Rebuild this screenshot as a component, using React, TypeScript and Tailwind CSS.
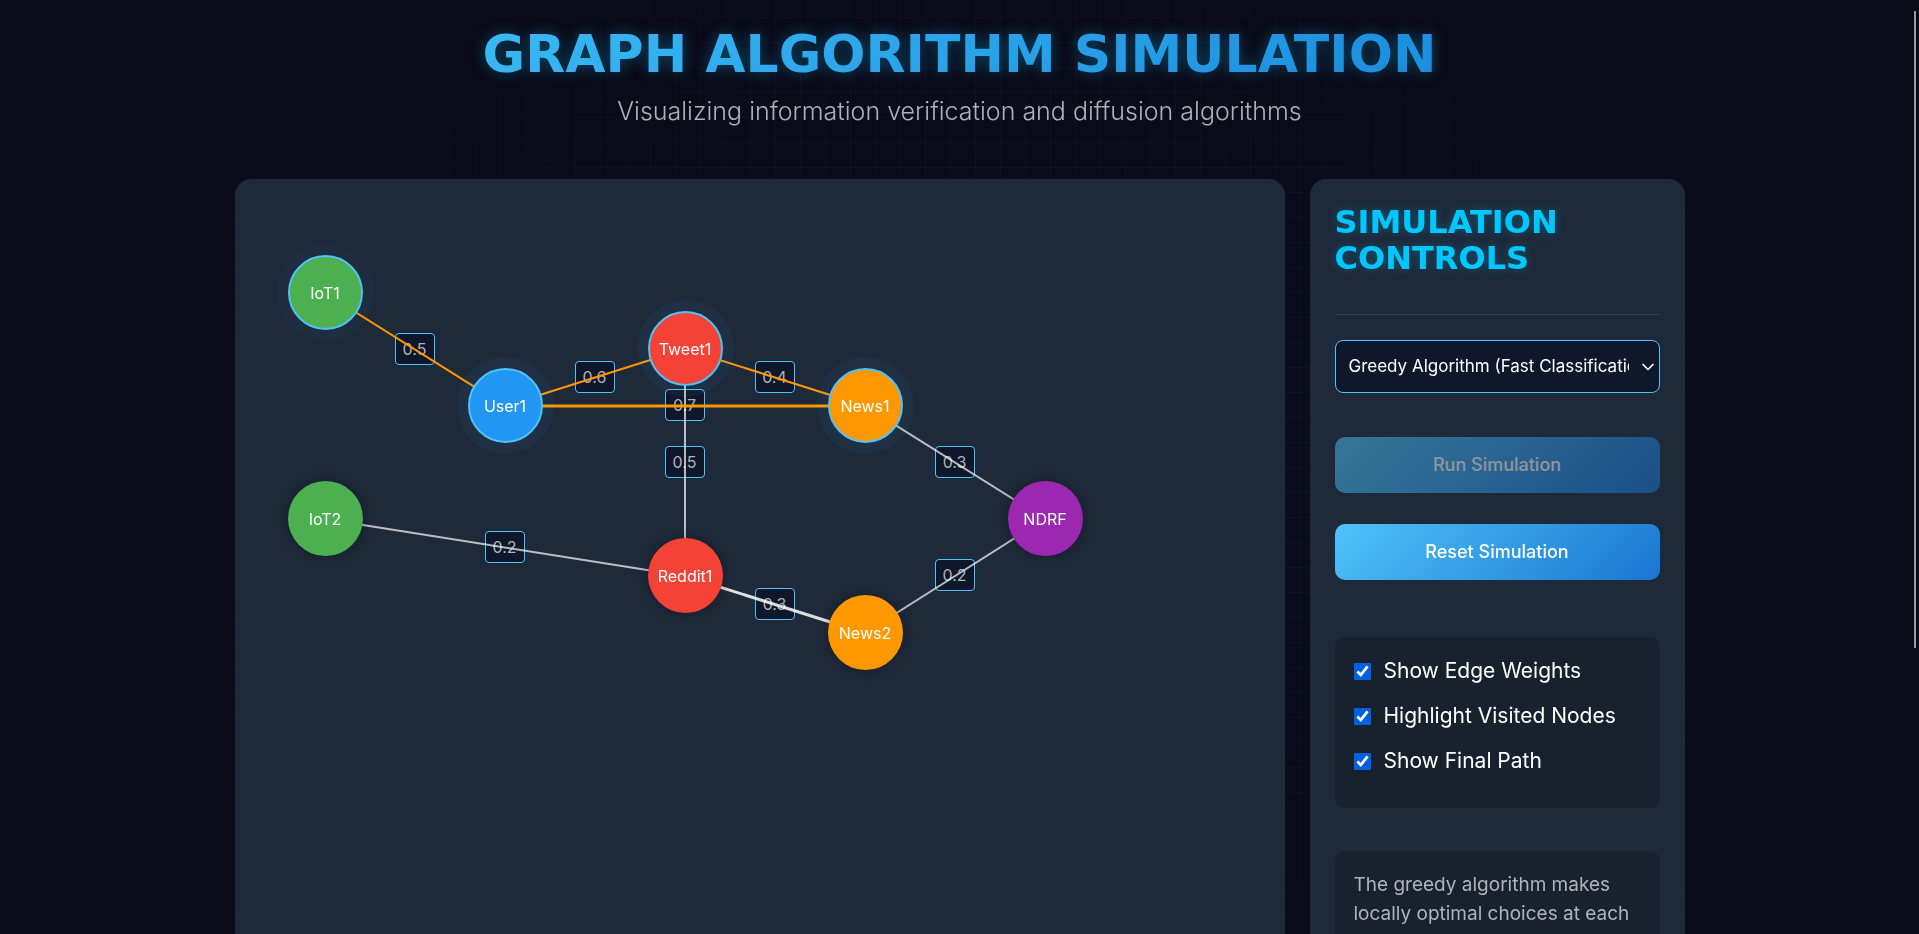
import { useState } from 'react';
import { ChevronDown } from 'lucide-react';

type GraphNode = { id: string; x: number; y: number; color: string; visited?: string };
type GraphEdge = { from: string; to: string; weight?: string; width: number; onPath?: boolean };

const NODES: GraphNode[] = [
  { id: 'IoT1', x: 90, y: 113, color: 'bg-[#4caf50]', visited: 'shadow-[0_0_0_11px_rgba(79,195,247,0.03)]' },
  { id: 'User1', x: 270, y: 226, color: 'bg-[#2196f3]', visited: 'shadow-[0_0_0_11px_rgba(79,195,247,0.05)]' },
  { id: 'Tweet1', x: 450, y: 169, color: 'bg-[#f44336]', visited: 'shadow-[0_0_0_11px_rgba(79,195,247,0.05)]' },
  { id: 'News1', x: 630, y: 226, color: 'bg-[#ff9800]', visited: 'shadow-[0_0_0_11px_rgba(79,195,247,0.05)]' },
  { id: 'IoT2', x: 90, y: 339, color: 'bg-[#4caf50]' },
  { id: 'Reddit1', x: 450, y: 396, color: 'bg-[#f44336]' },
  { id: 'News2', x: 630, y: 453, color: 'bg-[#ff9800]' },
  { id: 'NDRF', x: 810, y: 339, color: 'bg-[#9c27b0]' },
];

const EDGES: GraphEdge[] = [
  { from: 'IoT2', to: 'Reddit1', weight: '0.2', width: 2 },
  { from: 'Tweet1', to: 'Reddit1', weight: '0.5', width: 2 },
  { from: 'Reddit1', to: 'News2', weight: '0.3', width: 3 },
  { from: 'News1', to: 'NDRF', weight: '0.3', width: 2 },
  { from: 'News2', to: 'NDRF', weight: '0.2', width: 2 },
  { from: 'IoT1', to: 'User1', weight: '0.5', width: 2, onPath: true },
  { from: 'User1', to: 'Tweet1', weight: '0.6', width: 2, onPath: true },
  { from: 'Tweet1', to: 'News1', weight: '0.4', width: 2, onPath: true },
  { from: 'User1', to: 'News1', weight: '0.7', width: 3, onPath: true },
];

const nodeById = (id: string) => NODES.find((n) => n.id === id)!;

function Graph({ weights, visited, path }: { weights: boolean; visited: boolean; path: boolean }) {
  return (
    <section aria-label="Graph" className="relative min-h-[1100px] min-w-0 flex-1 overflow-hidden rounded-2xl bg-[#1e293a]">
      {weights &&
        EDGES.map((e) => {
          const a = nodeById(e.from);
          const b = nodeById(e.to);
          return (
            <span
              key={e.from + e.to}
              style={{ left: (a.x + b.x) / 2, top: Math.round((a.y + b.y) / 2) }}
              className="absolute flex h-8 w-10 -translate-x-1/2 -translate-y-1/2 items-center justify-center rounded border border-[#4fc3f7] bg-[#0f172a] text-base text-[#b0b3ba]"
            >
              {e.weight}
            </span>
          );
        })}
      <svg className="absolute inset-0 h-full w-full" aria-hidden="true">
        {EDGES.map((e) => {
          const a = nodeById(e.from);
          const b = nodeById(e.to);
          return (
            <line
              key={e.from + e.to}
              x1={a.x}
              y1={a.y + 1}
              x2={b.x}
              y2={b.y + 1}
              strokeWidth={e.width}
              stroke={e.onPath && path ? '#ff9800' : e.width > 2 ? 'rgba(255,255,255,0.85)' : 'rgba(255,255,255,0.7)'}
            />
          );
        })}
      </svg>
      {NODES.map((n) => (
        <div
          key={n.id}
          style={{ left: n.x, top: n.y }}
          className={`absolute flex size-[75px] -translate-x-[37px] -translate-y-[37px] items-center justify-center rounded-full text-base text-white ${n.color} ${
            n.visited && visited ? `border-2 border-[#4fc3f7] ${n.visited}` : 'shadow-[0_0_12px_rgba(0,0,0,0.3)]'
          }`}
        >
          {n.id}
        </div>
      ))}
    </section>
  );
}

function Toggle({ label, checked, onChange }: { label: string; checked: boolean; onChange: (v: boolean) => void }) {
  return (
    <label className="flex h-[30px] items-center gap-[13px] text-[21px] text-white">
      <input type="checkbox" checked={checked} onChange={(e) => onChange(e.target.checked)} className="size-[17px] accent-[#0060df]" />
      {label}
    </label>
  );
}

export default function App() {
  const [weights, setWeights] = useState(true);
  const [visited, setVisited] = useState(true);
  const [path, setPath] = useState(true);
  const button =
    'h-14 w-full rounded-[10px] bg-[linear-gradient(135deg,#4fc3f7,#1976d2)] text-lg font-medium text-white disabled:opacity-50';

  return (
    <div className="relative isolate h-screen overflow-y-auto bg-[radial-gradient(ellipse_at_center,#0b0d1e,#0a0a18_75%)] font-['Inter',sans-serif] [scrollbar-width:none]">
      <div className="pointer-events-none fixed inset-0 -z-10 bg-[linear-gradient(rgba(79,195,247,0.07)_1px,transparent_1px),linear-gradient(90deg,rgba(79,195,247,0.07)_1px,transparent_1px)] bg-size-[25px_25px] bg-position-[0_17px] [mask-image:radial-gradient(ellipse_50%_90%_at_center,black,transparent)]" />
      <div className="pointer-events-none fixed top-[11px] right-[3px] h-[637px] w-0.5 bg-[#9a9a9a]" />

      <div className="mx-auto max-w-[1490px] px-5 pb-10">
        <header className="pt-[25px] pb-[51px] text-center">
          <h1 className="bg-[linear-gradient(135deg,#4fc3f7,#1976d2)] bg-clip-text font-['DejaVu_Sans',sans-serif] text-[52px] leading-[58px] font-bold text-transparent [text-shadow:0_0_15px_rgba(0,195,255,0.35)]">
            GRAPH ALGORITHM SIMULATION
          </h1>
          <p className="mt-3 text-[25px] leading-[33px] font-light text-[#b0b0b8]">
            Visualizing information verification and diffusion algorithms
          </p>
        </header>

        <main className="flex gap-[25px]">
          <Graph weights={weights} visited={visited} path={path} />

          <aside className="w-[375px] shrink-0 rounded-2xl bg-[#1e293a] p-[25px]">
            <h2 className="border-b border-[#353f4e] pb-[38px] font-['DejaVu_Sans',sans-serif] text-[32px] leading-9 font-bold text-[#00c8ff] [text-shadow:0_0_10px_rgba(0,200,255,0.3)]">
              SIMULATION CONTROLS
            </h2>

            <div className="relative mt-[25px]">
              <select
                aria-label="Algorithm"
                className="block h-[53px] w-full appearance-none rounded-lg border border-[#4fc3f7] bg-[#0f172a] pr-[30px] pl-[13px] text-[17px] text-white"
              >
                <option>Greedy Algorithm (Fast Classification)</option>
                <option>Dijkstra (Shortest Path)</option>
              </select>
              <ChevronDown
                aria-hidden="true"
                className="pointer-events-none absolute top-1/2 right-0.5 size-5 -translate-y-1/2 text-white"
              />
            </div>

            <div className="mt-11 flex flex-col gap-[31px]">
              <button type="button" disabled className={button}>
                Run Simulation
              </button>
              <button type="button" className={button}>
                Reset Simulation
              </button>
            </div>

            <div className="mt-[57px] flex flex-col gap-[15px] rounded-[10px] bg-[#18212e] px-[19px] pt-[19px] pb-8">
              <Toggle label="Show Edge Weights" checked={weights} onChange={setWeights} />
              <Toggle label="Highlight Visited Nodes" checked={visited} onChange={setVisited} />
              <Toggle label="Show Final Path" checked={path} onChange={setPath} />
            </div>

            <p className="mt-[43px] rounded-[10px] bg-[#18212e] p-[19px] text-[19px] leading-[29px] text-[#b0b3b8]">
              The greedy algorithm makes locally optimal choices at each step, classifying information quickly.
            </p>
          </aside>
        </main>
      </div>
    </div>
  );
}
